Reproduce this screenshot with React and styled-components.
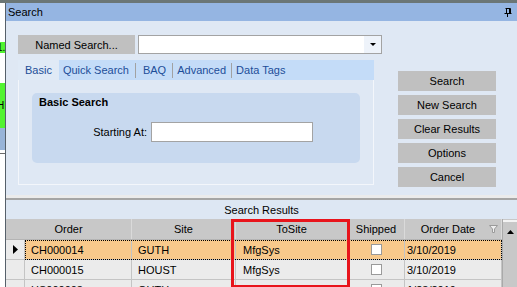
import { Fragment } from "react";
import styled, { createGlobalStyle } from "styled-components";

const GlobalStyle = createGlobalStyle`
  body {
    margin: 0;
    font: 11px "Liberation Sans", Arial, sans-serif;
    color: #000;
  }
`;

const Page = styled.div`
  position: relative;
  width: 517px;
  height: 287px;
  overflow: hidden;
  display: flex;
  flex-direction: column;
  background: #fff;
`;

const TopStrip = styled.div`
  height: 3px;
  flex-shrink: 0;
  background: #6b7676;
`;

const Main = styled.div`
  flex: 1;
  display: flex;
  min-height: 0;
`;

const Desktop = styled.div`
  width: 5px;
  flex-shrink: 0;
  display: flex;
  flex-direction: column;
  overflow: hidden;
`;

const DesktopBlock = styled.div`
  height: ${(p) => p.$h}px;
  flex-shrink: 0;
  background: ${(p) => p.$bg || "#fff"};
  border-bottom: ${(p) => (p.$line ? "1px solid #6a6a6a" : "none")};
  font-size: 10px;
  line-height: ${(p) => p.$h}px;
  white-space: nowrap;
  text-indent: -3px;
`;

const Window = styled.div`
  flex: 1;
  display: flex;
  flex-direction: column;
  border-left: 1px solid #56606a;
  min-width: 0;
`;

const TitleBar = styled.div`
  height: 18px;
  flex-shrink: 0;
  background: #95b5e2;
  display: flex;
  align-items: center;
  justify-content: space-between;
  padding: 0 5px 0 2px;
  font-size: 11px;
`;

const Body = styled.div`
  height: 160px;
  flex-shrink: 0;
  background: #dfe8f4;
  border-bottom: 3px solid #ebebeb;
  display: flex;
  padding: 14px 0 0 12px;
`;

const LeftCol = styled.div`
  width: 364px;
  display: flex;
  flex-direction: column;
`;

const NamedRow = styled.div`
  display: flex;
  height: 19px;
  gap: 3px;
`;

const GrayButton = styled.div`
  width: ${(p) => p.$w}px;
  height: ${(p) => p.$h || 20}px;
  background: #c0c0c0;
  display: flex;
  align-items: center;
  justify-content: center;
  font-size: 11px;
`;

const Combo = styled.div`
  flex: 1;
  display: flex;
  background: #fff;
  border: 1px solid #a3a3a3;
`;

const ComboArrow = styled.div`
  width: 17px;
  margin-left: auto;
  background: #eef3fa;
  display: flex;
  align-items: center;
  justify-content: center;
`;

const TabStrip = styled.div`
  margin-top: 6px;
  width: 356px;
  height: 20px;
  background: #c4dcf8;
  display: flex;
  align-items: center;
`;

const Tab = styled.div`
  height: 100%;
  display: flex;
  align-items: center;
  padding: ${(p) => p.$pad};
  background: ${(p) => (p.$active ? "#e0eaf6" : "transparent")};
  color: #1d4e98;
  font-size: 11px;
`;

const TabSep = styled.div`
  width: 1px;
  height: 15px;
  background: #a2a2a2;
`;

const TabPanel = styled.div`
  width: 356px;
  height: 105px;
  box-sizing: border-box;
  border: 1px solid #f3f6fb;
  border-top: none;
  padding: 13px 0 0 13px;
`;

const GroupBox = styled.div`
  width: 328px;
  height: 70px;
  box-sizing: border-box;
  background: #c8d9ef;
  border-radius: 5px;
  padding: 2px 7px;
`;

const GroupTitle = styled.div`
  font-weight: bold;
  font-size: 11px;
  line-height: 14px;
`;

const FieldRow = styled.div`
  margin-top: 13px;
  display: flex;
  align-items: center;
  gap: 4px;
`;

const FieldLabel = styled.div`
  width: 108px;
  text-align: right;
  font-size: 11px;
`;

const TextBox = styled.div`
  width: 162px;
  height: 20px;
  box-sizing: border-box;
  background: #fff;
  border: 1px solid #a3a3a3;
`;

const ButtonCol = styled.div`
  margin-left: 16px;
  padding-top: 36px;
  display: flex;
  flex-direction: column;
  gap: 4px;
`;

const GridFrame = styled.div`
  flex: 1;
  border-top: 2px solid #a5a5a5;
  display: flex;
  flex-direction: column;
  min-height: 0;
`;

const ResultsBar = styled.div`
  height: 19px;
  flex-shrink: 0;
  background: #dde7f3;
  display: flex;
  align-items: center;
  justify-content: center;
  font-size: 11px;
`;

const GridArea = styled.div`
  flex: 1;
  display: flex;
  min-height: 0;
`;

const Table = styled.div`
  width: 496px;
  display: flex;
  flex-direction: column;
`;

const HeaderRow = styled.div`
  height: 21px;
  flex-shrink: 0;
  display: flex;
  background: #c8c8c8;
  border-bottom: 1px solid #b4b4b4;
  box-sizing: border-box;
`;

const HeaderCell = styled.div`
  width: ${(p) => p.$w}px;
  box-sizing: border-box;
  border-right: 1px solid #dadada;
  display: flex;
  align-items: center;
  justify-content: center;
  position: relative;
  font-size: 11px;
  padding-right: ${(p) => p.$pr || 0}px;
`;

const FilterIcon = styled.svg`
  position: absolute;
  right: 3px;
  top: 6px;
`;

const Row = styled.div`
  height: 20px;
  flex-shrink: 0;
  display: flex;
`;

const RowHead = styled.div`
  width: 19px;
  box-sizing: border-box;
  background: #ebebeb;
  border-right: 1px solid #c4c4c4;
  border-bottom: 1px solid #c4c4c4;
  display: flex;
  align-items: center;
  justify-content: center;
`;

const RowCells = styled.div`
  display: flex;
  background: ${(p) => (p.$selected ? "#f8c98b" : "#ebebeb")};
  outline: ${(p) => (p.$selected ? "1px dotted #000" : "none")};
  outline-offset: -1px;
`;

const Cell = styled.div`
  width: ${(p) => p.$w}px;
  box-sizing: border-box;
  border-right: 1px solid #c4c4c4;
  border-bottom: 1px solid #c4c4c4;
  display: flex;
  align-items: center;
  justify-content: ${(p) => (p.$center ? "center" : "flex-start")};
  padding-left: ${(p) => (p.$center ? 0 : p.$pl ?? 6)}px;
  font-size: 11px;
`;

const Check = styled.div`
  width: 11px;
  height: 11px;
  box-sizing: border-box;
  background: #fff;
  border: 1px solid #9a9a9a;
`;

const ScrollBar = styled.div`
  width: 15px;
  background: #c8c8c8;
  border-left: 1px solid #a9a9a9;
  box-sizing: border-box;
`;

const ScrollUp = styled.div`
  height: 20px;
  border-top: 2px solid #f4f4f4;
  margin-top: 1px;
  display: flex;
  align-items: center;
  justify-content: center;
`;

const Highlight = styled.div`
  position: absolute;
  left: 231px;
  top: 219px;
  width: 119px;
  height: 69px;
  box-sizing: border-box;
  border: 3px solid #e8141b;
`;

const widths = [107, 104, 112, 57, 97];

const tabs = [
  { label: "Basic", pad: "0 7px", active: true },
  { label: "Quick Search", pad: "0 6px 0 4px" },
  { label: "BAQ", pad: "0 6px 0 7px" },
  { label: "Advanced", pad: "0 5px 0 4px" },
  { label: "Data Tags", pad: "0 5px 0 4px" },
];

const rows = [
  { order: "CH000014", site: "GUTH", to: "MfgSys", date: "3/10/2019", selected: true },
  { order: "CH000015", site: "HOUST", to: "MfgSys", date: "3/10/2019" },
  { order: "HS000003", site: "GUTH", to: "", date: "1/23/2019" },
];

function Pin() {
  return (
    <svg width="8" height="9" viewBox="0 0 8 9">
      <path d="M1.5 0.5H6.5M2.5 0.5V5M5.5 0.5V5M6.5 0.5V5M0.5 5.5H7.5M3.5 5.5V9" stroke="#000" strokeWidth="1" fill="none" />
    </svg>
  );
}

export default function App() {
  return (
    <Page>
      <GlobalStyle />
      <TopStrip />
      <Main>
        <Desktop>
          <DesktopBlock $h={39} />
          <DesktopBlock $h={11} $bg="#52f430">1.</DesktopBlock>
          <DesktopBlock $h={30} />
          <DesktopBlock $h={45} $bg="#52f430">H</DesktopBlock>
          <DesktopBlock $h={22} $bg="#98b4d8" />
          <DesktopBlock $h={3} $line />
          <DesktopBlock $h={140} />
        </Desktop>
        <Window>
          <TitleBar>
            <span>Search</span>
            <Pin />
          </TitleBar>
          <Body>
            <LeftCol>
              <NamedRow>
                <GrayButton $w={117} $h={19}>Named Search...</GrayButton>
                <Combo>
                  <ComboArrow>
                    <svg width="6" height="3" viewBox="0 0 6 3">
                      <path d="M0 0H6L3 3Z" fill="#000" />
                    </svg>
                  </ComboArrow>
                </Combo>
              </NamedRow>
              <TabStrip>
                {tabs.map((t, i) => (
                  <Fragment key={t.label}>
                    {i > 1 && <TabSep />}
                    <Tab $active={t.active} $pad={t.pad}>
                      {t.label}
                    </Tab>
                  </Fragment>
                ))}
              </TabStrip>
              <TabPanel>
                <GroupBox>
                  <GroupTitle>Basic Search</GroupTitle>
                  <FieldRow>
                    <FieldLabel>Starting At:</FieldLabel>
                    <TextBox />
                  </FieldRow>
                </GroupBox>
              </TabPanel>
            </LeftCol>
            <ButtonCol>
              {["Search", "New Search", "Clear Results", "Options", "Cancel"].map((b) => (
                <GrayButton key={b} $w={98}>{b}</GrayButton>
              ))}
            </ButtonCol>
          </Body>
          <GridFrame>
            <ResultsBar>Search Results</ResultsBar>
            <GridArea>
              <Table>
                <HeaderRow>
                  <HeaderCell $w={126}>Order</HeaderCell>
                  <HeaderCell $w={104}>Site</HeaderCell>
                  <HeaderCell $w={112}>ToSite</HeaderCell>
                  <HeaderCell $w={57}>Shipped</HeaderCell>
                  <HeaderCell $w={97} $pr={10}>
                    Order Date
                    <FilterIcon width="9" height="8" viewBox="0 0 9 8">
                      <path d="M0.5 0.5H8.5L5.5 4V7.5H3.5V4Z" fill="#eeeeee" stroke="#9a9a9a" />
                    </FilterIcon>
                  </HeaderCell>
                </HeaderRow>
                {rows.map((r) => (
                  <Row key={r.order}>
                    <RowHead>
                      {r.selected && (
                        <svg width="5" height="9" viewBox="0 0 5 9">
                          <path d="M0 0L5 4.5L0 9Z" fill="#000" />
                        </svg>
                      )}
                    </RowHead>
                    <RowCells $selected={r.selected}>
                      <Cell $w={widths[0]}>{r.order}</Cell>
                      <Cell $w={widths[1]}>{r.site}</Cell>
                      <Cell $w={widths[2]} $pl={7}>{r.to}</Cell>
                      <Cell $w={widths[3]} $center>
                        <Check />
                      </Cell>
                      <Cell $w={widths[4]} $pl={2}>{r.date}</Cell>
                    </RowCells>
                  </Row>
                ))}
              </Table>
              <ScrollBar>
                <ScrollUp>
                  <svg width="7" height="4" viewBox="0 0 7 4">
                    <path d="M0 4L3.5 0L7 4Z" fill="#000" />
                  </svg>
                </ScrollUp>
              </ScrollBar>
            </GridArea>
          </GridFrame>
        </Window>
      </Main>
      <Highlight />
    </Page>
  );
}
